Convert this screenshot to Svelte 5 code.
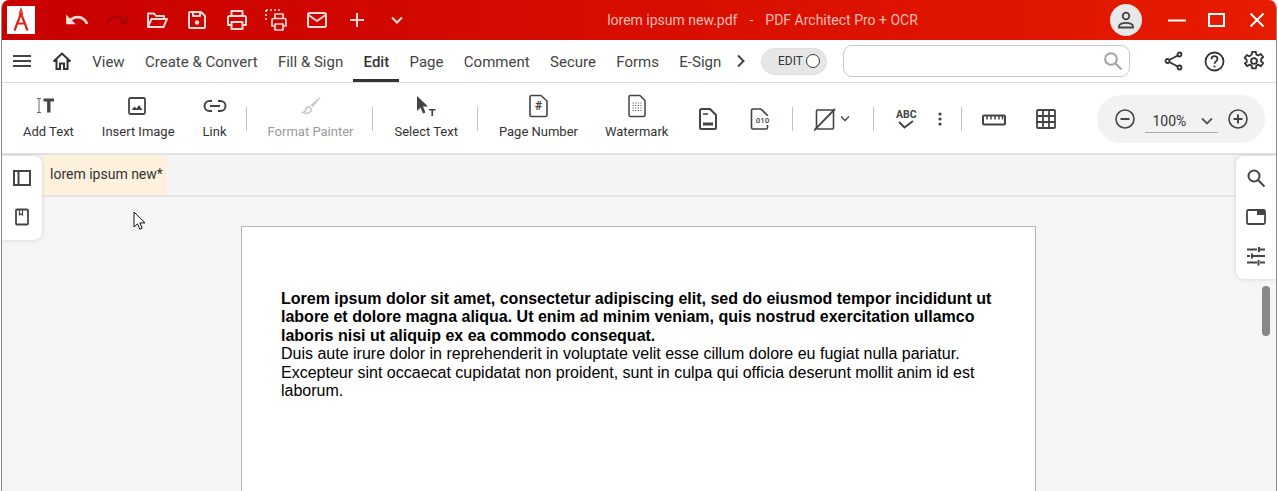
<script>
  const menus = ['View', 'Create & Convert', 'Fill & Sign', 'Edit', 'Page', 'Comment', 'Secure', 'Forms', 'E-Sign'];
</script>

<div class="window">
  <!-- title bar -->
  <header class="titlebar">
    <div class="logo">
      <svg width="28" height="28" viewBox="0 0 28 28" fill="none" stroke="#e2231a" stroke-width="2.200">
        <path d="M14 7.500 7.500 24.500M14 7.500l6.500 17M9.500 17.500h9" />
        <path d="M12.500 7.500 14 3l1.500 4.500z" stroke-width="1.300" />
      </svg>
    </div>
    <div class="quick">
      <button class="tb"><svg width="26" height="26" viewBox="0 0 24 24" fill="currentColor"><path d="M12.5 8c-2.65 0-5.05.99-6.9 2.6L2 7v9h9l-3.62-3.62c1.39-1.16 3.16-1.88 5.12-1.88 3.54 0 6.55 2.31 7.6 5.5l2.37-.78C21.08 11.03 17.15 8 12.5 8z" /></svg></button>
      <button class="tb dim"><svg width="26" height="26" viewBox="0 0 24 24" fill="currentColor"><path d="M11.5 8c2.65 0 5.05.99 6.9 2.6L22 7v9h-9l3.62-3.62C15.23 11.22 13.46 10.5 11.5 10.5c-3.54 0-6.55 2.31-7.6 5.5l-2.37-.78C2.92 11.03 6.85 8 11.5 8z" /></svg></button>
      <button class="tb"><svg width="22" height="22" viewBox="0 0 22 22" fill="none" stroke="currentColor" stroke-width="2" stroke-linejoin="round"><path d="M2 18V4.500h6l2 2.500h8v3M2 18l3.500-8H21l-3.500 8z" /></svg></button>
      <button class="tb"><svg width="20" height="20" viewBox="0 0 20 20" fill="none" stroke="currentColor" stroke-width="2" stroke-linejoin="round"><path d="M2 3a1 1 0 0 1 1-1h11l4 4v11a1 1 0 0 1-1 1H3a1 1 0 0 1-1-1zM6 2v4h7V2" /><circle cx="10" cy="12.500" r="2.200" fill="currentColor" stroke="none" /></svg></button>
      <button class="tb"><svg width="22" height="22" viewBox="0 0 22 22" fill="none" stroke="currentColor" stroke-width="2" stroke-linejoin="round"><path d="M5.500 7V2h11v5M5.500 16H2V8.500a1.500 1.500 0 0 1 1.500-1.500h15A1.500 1.500 0 0 1 20 8.500V16h-3.500" /><path d="M5.500 13h11v7h-11z" /></svg></button>
      <button class="tb"><svg width="24" height="24" viewBox="0 0 24 24" fill="none" stroke="currentColor" stroke-width="1.700" stroke-linejoin="round"><path d="M1 2h14M1 2v10" stroke-dasharray="2 2" /><path d="M10 10V6h8v4M10 18H7v-6a1.500 1.500 0 0 1 1.500-1.500h11A1.500 1.500 0 0 1 21 12v6h-3" /><path d="M10 16h8v6h-8z" /></svg></button>
      <button class="tb"><svg width="22" height="20" viewBox="0 0 22 20" fill="none" stroke="currentColor" stroke-width="2" stroke-linejoin="round"><rect x="2" y="3" width="18" height="14" rx="1.500" /><path d="m2.500 5 8.500 6 8.500-6" /></svg></button>
      <button class="tb"><svg width="18" height="18" viewBox="0 0 18 18" stroke="currentColor" stroke-width="2"><path d="M9 2v14M2 9h14" /></svg></button>
      <button class="tb"><svg width="16" height="16" viewBox="0 0 16 16" fill="none" stroke="currentColor" stroke-width="2"><path d="m3 5.500 5 5 5-5" /></svg></button>
    </div>
    <div class="doc-title">lorem ipsum new.pdf<span class="dash">-</span>PDF Architect Pro + OCR</div>
    <div class="avatar">
      <svg width="20" height="20" viewBox="0 0 20 20" fill="none" stroke="#444" stroke-width="1.800"><circle cx="10" cy="6" r="3.300" /><path d="M3 17.500v-1.300c0-2.200 4-3.400 7-3.400s7 1.200 7 3.400v1.300z" /></svg>
    </div>
    <div class="winctl">
      <button class="wb"><svg width="18" height="18" viewBox="0 0 18 18" stroke="currentColor" stroke-width="2"><path d="M0 9.500h18" /></svg></button>
      <button class="wb"><svg width="18" height="16" viewBox="0 0 18 16" fill="none" stroke="currentColor" stroke-width="2"><rect x="1" y="2" width="15" height="12" /></svg></button>
      <button class="wb"><svg width="16" height="16" viewBox="0 0 16 16" stroke="currentColor" stroke-width="2"><path d="m1.500 1.500 13 13M14.500 1.500l-13 13" /></svg></button>
    </div>
  </header>

  <!-- menu bar -->
  <nav class="menubar">
    <button class="mi burger"><svg width="18" height="14" viewBox="0 0 18 14" stroke="#444" stroke-width="2"><path d="M0 2h18M0 7h18M0 12h18" /></svg></button>
    <button class="mi home"><svg width="20" height="20" viewBox="0 0 20 20" fill="none" stroke="#333" stroke-width="2"><path d="M1.500 10.500 10 2.500l8.500 8M4.500 8.500V18h3.500v-5.500h4V18h3.500V8.500" /></svg></button>
    <div class="tabs">
      {#each menus as m}
        <button class="menu" class:on={m === 'Edit'}>{m}</button>
      {/each}
    </div>
    <svg class="more" width="10" height="14" viewBox="0 0 10 14" fill="none" stroke="#444" stroke-width="2"><path d="m2 1.500 5.500 5.500L2 12.500" /></svg>
    <div class="toggle"><span>EDIT</span><i></i></div>
    <div class="search">
      <svg width="20" height="20" viewBox="0 0 20 20" fill="none" stroke="#a0a0a0" stroke-width="2"><circle cx="8" cy="8" r="5.800" /><path d="m12.500 12.500 6 6" /></svg>
    </div>
    <button class="mi share"><svg width="20" height="20" viewBox="0 0 20 20" fill="none" stroke="#333" stroke-width="1.800"><circle cx="15.500" cy="3.500" r="2" /><circle cx="3.500" cy="10" r="2" /><circle cx="15.500" cy="16.500" r="2" /><path d="m5.300 9 8.400-4.500M5.300 11l8.400 4.500" /></svg></button>
    <button class="mi help"><svg width="21" height="21" viewBox="0 0 21 21" fill="none" stroke="#333" stroke-width="1.800"><circle cx="10.500" cy="10.500" r="9" /><path d="M7.500 8.200c0-1.800 1.400-3 3-3s3 1.200 3 2.800c0 2.300-3 2.500-3 4.800" /><circle cx="10.500" cy="15.500" r="1.100" fill="#333" stroke="none" /></svg></button>
    <button class="mi gear"><svg width="22" height="22" viewBox="0 0 24 24" fill="none" stroke="#333" stroke-width="2" stroke-linejoin="round"><circle cx="12" cy="12" r="3.200" /><path d="M10 2h4l.6 3 2.200 1 2.700-1.600 2.500 3.200-2.200 2.100v2.600l2.200 2.100-2.500 3.200-2.700-1.600-2.200 1-.6 3h-4l-.6-3-2.200-1-2.700 1.600-2.500-3.200L4 13.300v-2.600L1.800 8.600l2.500-3.200L7 7l2.400-2z" /></svg></button>
  </nav>

  <!-- ribbon -->
  <section class="ribbon">
    <button class="tool addtext">
      <span class="ic"><svg width="20" height="18" viewBox="0 0 20 18"><path d="M1 1.500h4M1 15.500h4M3 1.500v14" stroke="#666" stroke-width="1" fill="none" /><path d="M7.500 1.500h10.500v3h-3.500v11h-3.400v-11H7.500z" fill="#444" /></svg></span>Add Text
    </button>
    <button class="tool image"><span class="ic"><svg width="18" height="18" viewBox="0 0 18 18" fill="none"><rect x="1" y="1" width="16" height="16" rx="1.500" stroke="#444" stroke-width="1.800" /><path d="m3.500 13 3-3.500 2 2 2.500-3.500 3.500 5z" fill="#444" /></svg></span>Insert Image</button>
    <button class="tool"><span class="ic"><svg width="24" height="14" viewBox="0 0 24 14" fill="none" stroke="#444" stroke-width="2"><path d="M9 2H6.500a5 5 0 0 0 0 10H9M15 2h2.500a5 5 0 0 1 0 10H15M7 7h10" /></svg></span>Link</button>
    <i class="sep"></i>
    <button class="tool off"><span class="ic"><svg width="20" height="20" viewBox="0 0 20 20" fill="none"><path d="m19 1-9.500 8 2.200 2.200L19.500 2z" fill="#c8c8c8" /><path d="M8.500 11c-2-.5-4 1-4 3.500 0 .5-1.500 1.500-2.500 2 3.500 1.500 8 .5 8.500-3z" stroke="#c8c8c8" stroke-width="1.600" /></svg></span>Format Painter</button>
    <i class="sep"></i>
    <button class="tool"><span class="ic"><svg width="20" height="22" viewBox="0 0 20 22"><path d="M1 1v15l3.500-3.500 2.500 6 2.500-1-2.500-6H12z" fill="#444" /><path d="M13 14h6.500v1.600h-2.400V21h-1.700v-5.400H13z" fill="#444" /></svg></span>Select Text</button>
    <i class="sep"></i>
    <button class="tool"><span class="ic"><svg width="20" height="24" viewBox="0 0 20 24" fill="none"><path d="M2 3a1.500 1.500 0 0 1 1.500-1.500H13L19 7v14a1.500 1.500 0 0 1-1.500 1.500h-14A1.500 1.500 0 0 1 2 21z" stroke="#444" stroke-width="1.600" stroke-linejoin="round" /><text x="10.500" y="16" text-anchor="middle" class="hash">#</text></svg></span>Page Number</button>
    <button class="tool wm"><span class="ic"><svg width="20" height="24" viewBox="0 0 20 24" fill="none"><path d="M2 3a1.500 1.500 0 0 1 1.500-1.500H13L18 6.500V21a1.500 1.500 0 0 1-1.500 1.500h-13A1.500 1.500 0 0 1 2 21z" stroke="#444" stroke-width="1.500" stroke-linejoin="round" /><path d="M5.500 9h9M5.500 11.500h9M5.500 14h9M5.500 16.500h9" stroke="#666" stroke-width="1.200" stroke-dasharray="1.300 1.300" /></svg></span>Watermark</button>

    <button class="ico first"><svg width="18" height="22" viewBox="0 0 18 22" fill="none" stroke="#444" stroke-width="2" stroke-linejoin="round"><path d="M1 2.500A1.500 1.500 0 0 1 2.500 1H11l6 6v12.500a1.500 1.500 0 0 1-1.500 1.500h-13A1.500 1.500 0 0 1 1 19.500z" /><path d="M4 6h5" stroke-width="1.600" /><path d="M4 16h10" stroke-width="3" /></svg></button>
    <button class="ico bin"><svg width="20" height="22" viewBox="0 0 20 22" fill="none"><path d="M17.500 8V7.500L11 1H3A1.500 1.500 0 0 0 1.500 2.500v17A1.500 1.500 0 0 0 3 21h13a1.500 1.500 0 0 0 1.500-1.500V17" stroke="#444" stroke-width="1.600" stroke-linejoin="round" /><text x="12.500" y="15" text-anchor="middle" class="bits">010</text></svg></button>
    <i class="sep s2"></i>
    <button class="ico slash"><svg width="22" height="23" viewBox="0 0 22 23" fill="none" stroke="#444" stroke-width="1.600"><rect x="2.500" y="2" width="17" height="19" rx="1" /><path d="M0 22.500 21 1" stroke-width="1.800" /></svg><svg class="caret" width="10" height="8" viewBox="0 0 10 8" fill="none" stroke="#444" stroke-width="1.300"><path d="m1 1.500 4 4 4-4" /></svg></button>
    <i class="sep s3"></i>
    <button class="ico abc"><span>ABC</span><svg width="16" height="9" viewBox="0 0 16 9" fill="none" stroke="#444" stroke-width="2"><path d="m1 2 5.500 5.500L15 1" /></svg></button>
    <button class="ico dots"><svg width="4" height="14" viewBox="0 0 4 14" fill="#444"><circle cx="2" cy="2" r="1.600" /><circle cx="2" cy="7" r="1.600" /><circle cx="2" cy="12" r="1.600" /></svg></button>
    <i class="sep s4"></i>
    <button class="ico ruler"><svg width="24" height="12" viewBox="0 0 24 12" fill="none" stroke="#444" stroke-width="2"><rect x="1" y="1.500" width="22" height="9" rx="1" /><path d="M5 2v3.500M9 2v3.500M13 2v3.500M17 2v3.500M20.500 2v3.500" stroke-width="1.500" /></svg></button>
    <button class="ico grid"><svg width="20" height="20" viewBox="0 0 20 20" fill="none" stroke="#444" stroke-width="1.800"><rect x="1" y="1" width="18" height="18" rx="1" /><path d="M7 1v18M13 1v18M1 7h18M1 13h18" /></svg></button>

    <div class="zoom">
      <svg width="20" height="20" viewBox="0 0 20 20" fill="none" stroke="#444" stroke-width="1.600"><circle cx="10" cy="10" r="9" /><path d="M5.500 10h9" stroke-width="2" /></svg>
      <div class="pct"><span>100%</span><svg width="12" height="8" viewBox="0 0 12 8" fill="none" stroke="#555" stroke-width="1.800"><path d="m1 1.500 5 5 5-5" /></svg></div>
      <svg width="20" height="20" viewBox="0 0 20 20" fill="none" stroke="#444" stroke-width="1.600"><circle cx="10" cy="10" r="9" /><path d="M5.500 10h9M10 5.500v9" stroke-width="2" /></svg>
    </div>
  </section>

  <!-- document area -->
  <main class="workspace">
    <div class="doctabs"><div class="doctab">lorem ipsum new*</div></div>
    <div class="canvas">
      <article class="page">
        <p><b>Lorem ipsum dolor sit amet, consectetur adipiscing elit, sed do eiusmod tempor incididunt ut labore et dolore magna aliqua. Ut enim ad minim veniam, quis nostrud exercitation ullamco laboris nisi ut aliquip ex ea commodo consequat.</b><br />Duis aute irure dolor in reprehenderit in voluptate velit esse cillum dolore eu fugiat nulla pariatur. Excepteur sint occaecat cupidatat non proident, sunt in culpa qui officia deserunt mollit anim id est laborum.</p>
      </article>
    </div>

    <aside class="side left">
      <button><svg width="20" height="18" viewBox="0 0 20 18" fill="none" stroke="#444" stroke-width="2"><rect x="2" y="2" width="16" height="14" /><path d="M6.500 2v14" /></svg></button>
      <button><svg width="16" height="18" viewBox="0 0 16 18" fill="none" stroke="#444" stroke-width="1.800"><rect x="2" y="1.500" width="12" height="15" rx="1" /><path d="M5.500 2v5l1.500-1 1.500 1V2" stroke-width="1.200" /></svg></button>
    </aside>
    <aside class="side right">
      <button><svg width="20" height="20" viewBox="0 0 20 20" fill="none" stroke="#444" stroke-width="2"><circle cx="8" cy="8" r="5.500" /><path d="m12 12 6.500 6.500" /></svg></button>
      <button><svg width="20" height="16" viewBox="0 0 20 16" fill="none"><rect x="1" y="1" width="18" height="14" rx="1.500" stroke="#444" stroke-width="1.800" /><path d="M11 1h8v5h-8z" fill="#444" /></svg></button>
      <button><svg width="20" height="20" viewBox="0 0 20 20" fill="none" stroke="#444" stroke-width="2"><path d="M1 3.500h10M14 3.500h5M13 1v5M1 10h3M7 10h12M6 7.500v5M1 16.500h10M14 16.500h5M12.500 14v5.500" /></svg></button>
    </aside>
    <div class="thumb"></div>
    <svg class="cursor" width="14" height="20" viewBox="0 0 14 20"><path d="M1 1v15l3.500-3.200 2.300 5.400 2.400-1-2.300-5.300H12z" fill="#fff" stroke="#111" stroke-width="1" stroke-linejoin="round" /></svg>
  </main>
</div>

<style>
  :global(body) {
    margin: 0;
    background: #fff;
    overflow: hidden;
  }

  button {
    border: 0;
    padding: 0;
    background: none;
    font: inherit;
    color: inherit;
  }

  .window {
    box-sizing: border-box;
    width: 1276px;
    height: 491px;
    margin: 0 1px;
    display: flex;
    flex-direction: column;
    overflow: hidden;
    border-radius: 8px 8px 0 0;
    border: solid #8c8c8c;
    border-width: 0 1px;
    font-family: Roboto, sans-serif;
    color: #444;
  }

  .titlebar {
    height: 40px;
    margin: 0 -1px;
    flex: none;
    display: flex;
    align-items: center;
    background: linear-gradient(90deg, #c80000, #e61b00);
    color: #fbdada;
  }
  .logo {
    width: 28px;
    height: 28px;
    margin-left: 6px;
    background: #fff;
  }
  .quick {
    display: flex;
    margin-left: 22px;
  }
  .tb,
  .wb {
    width: 40px;
    height: 40px;
    display: flex;
    align-items: center;
    justify-content: center;
  }
  .tb.dim {
    color: #a60606;
  }
  .doc-title {
    flex: 1;
    padding-right: 2px;
    text-align: center;
    font-size: 14px;
    color: #f6bcb4;
  }
  .dash {
    margin: 0 12px;
  }
  .avatar {
    width: 32px;
    height: 32px;
    border-radius: 50%;
    background: #e8e8e8;
    display: flex;
    align-items: center;
    justify-content: center;
    margin-right: 15px;
  }
  .winctl {
    display: flex;
    color: #fff;
  }

  .menubar {
    height: 42px;
    flex: none;
    display: flex;
    align-items: center;
    border-bottom: 1px solid #dcdcdc;
    background: #fff;
  }
  .mi {
    display: flex;
    align-items: center;
    justify-content: center;
  }
  .burger {
    margin-left: 11px;
  }
  .home {
    margin-left: 21px;
  }
  .tabs {
    display: flex;
    margin-left: 10px;
    align-self: stretch;
  }
  .menu {
    height: 42px;
    padding: 4px 10.200px 0;
    font-size: 15px;
    box-sizing: border-box;
    border-bottom: 3px solid transparent;
    white-space: nowrap;
  }
  .menu.on {
    font-weight: 500;
    color: #333;
    border-bottom-color: #333;
  }
  .more {
    margin-left: 4.500px;
  }
  .toggle {
    box-sizing: border-box;
    width: 66px;
    height: 27px;
    margin-left: 15px;
    padding: 0 6px 0 16px;
    display: flex;
    align-items: center;
    justify-content: space-between;
    border-radius: 14px;
    background: #e6e6e6;
    border: 1px solid #dedede;
    font-size: 12px;
    color: #333;
  }
  .toggle i {
    width: 12px;
    height: 12px;
    border: 1px solid #333;
    border-radius: 50%;
    background: #fff;
  }
  .search {
    box-sizing: border-box;
    width: 287px;
    height: 32px;
    margin-left: 16px;
    padding-right: 6px;
    display: flex;
    align-items: center;
    justify-content: flex-end;
    border: 1px solid #c9c9c9;
    border-radius: 9px;
  }
  .share {
    margin-left: 34px;
  }
  .help {
    margin-left: 20px;
  }
  .gear {
    margin-left: 18px;
  }

  .ribbon {
    height: 72px;
    flex: none;
    box-sizing: border-box;
    display: flex;
    align-items: center;
    padding: 2px 0 0 21px;
    border-bottom: 2px solid #e2e2e2;
    background: #fff;
  }
  .tool {
    display: flex;
    flex-direction: column;
    align-items: center;
    align-self: flex-start;
    font-size: 13px;
    color: #333;
    margin-top: 6px;
    margin-right: 27px;
    white-space: nowrap;
  }
  .ic {
    height: 30px;
    display: flex;
    align-items: center;
    justify-content: center;
    margin-bottom: 3px;
  }
  .tool.addtext {
    margin-right: 28px;
  }
  .addtext .ic {
    margin-right: 4px;
  }
  .tool.image {
    margin-right: 28px;
  }
  .image .ic {
    margin-right: 3px;
  }
  .tool:has(+ .sep) {
    margin-right: 19px;
  }
  .tool.off {
    color: #9a9a9a;
  }
  .sep {
    width: 1px;
    height: 24px;
    margin-right: 21px;
    background: #c4c4c4;
  }
  .hash {
    font: 700 12px Roboto, sans-serif;
    fill: #444;
  }
  .bits {
    font: 500 8px Roboto, sans-serif;
    fill: #444;
  }
  .ico {
    display: flex;
    align-items: center;
    justify-content: center;
  }
  .tool.wm {
    margin-right: 31px;
  }
  .bin {
    margin-left: 33px;
    margin-right: 22px;
  }
  .s2 {
    margin-right: 21px;
  }
  .caret {
    margin-left: 4px;
  }
  .s3 {
    margin-left: 23px;
    margin-right: 20px;
  }
  .abc {
    flex-direction: column;
    width: 24px;
    font: 700 10.500px Roboto, sans-serif;
    line-height: 11px;
  }
  .dots {
    margin-left: 20px;
  }
  .s4 {
    margin-left: 19px;
    margin-right: 20px;
  }
  .ruler {
    padding-top: 1px;
  }
  .grid {
    margin-left: 30px;
  }
  .zoom {
    width: 168px;
    height: 48px;
    box-sizing: border-box;
    margin-left: 41px;
    padding: 0 17px 0 18px;
    display: flex;
    align-items: center;
    justify-content: space-between;
    border-radius: 24px;
    background: #f2f2f2;
  }
  .pct {
    box-sizing: border-box;
    width: 73px;
    height: 24px;
    margin-top: 4px;
    padding: 0 5px 0 7px;
    display: flex;
    align-items: center;
    justify-content: space-between;
    border-bottom: 1px solid #aaa;
    font-size: 14px;
    color: #333;
  }

  .workspace {
    position: relative;
    flex: 1;
    min-height: 0;
    display: flex;
    flex-direction: column;
    background: #f5f5f5;
  }
  .doctabs {
    height: 40px;
    flex: none;
    padding-left: 41px;
    border-bottom: 2px solid #e6e6e6;
    background: #f4f4f4;
  }
  .doctab {
    width: 124px;
    height: 40px;
    box-sizing: border-box;
    padding: 11px 0 0 7px;
    background: #fdf1dd;
    font-size: 14px;
    color: #333;
  }
  .canvas {
    flex: 1;
    min-height: 0;
    overflow: hidden;
    padding: 29px 0 0 239px;
  }
  .page {
    box-sizing: border-box;
    width: 795px;
    height: 600px;
    padding: 63px 39px 0;
    background: #fff;
    border: 1px solid #b4b4b4;
  }
  .page p {
    margin: 0;
    width: 714px;
    font: 16px/18.400px "Liberation Sans", Arial, sans-serif;
    color: #000;
  }

  .side {
    position: absolute;
    top: 1px;
    width: 40px;
    padding: 2px 0 4px;
    display: flex;
    flex-direction: column;
    background: #fff;
    box-shadow: 0 0 4px rgba(0, 0, 0, 0.16);
  }
  .side button {
    height: 39px;
    display: flex;
    align-items: center;
    justify-content: center;
  }
  .side.left {
    left: 0;
    border-radius: 0 8px 8px 0;
  }
  .side.right {
    right: 0;
    border-radius: 8px 0 0 8px;
  }
  .thumb {
    position: absolute;
    right: 6px;
    top: 131px;
    width: 8px;
    height: 50px;
    border-radius: 4px;
    background: #888;
  }
  .cursor {
    position: absolute;
    left: 131px;
    top: 56px;
  }
</style>
